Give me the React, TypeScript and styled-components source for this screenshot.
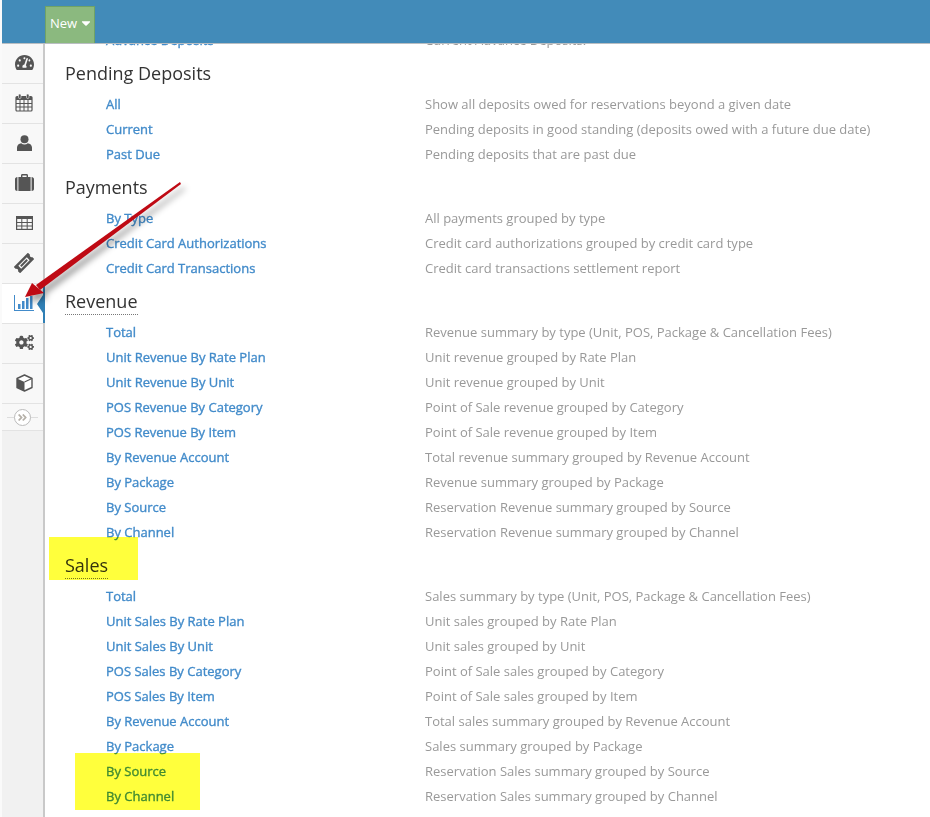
import React from 'react';
import styled, { createGlobalStyle } from 'styled-components';
import { FaAngleDoubleRight, FaCaretDown, FaCogs, FaTachometerAlt } from 'react-icons/fa';

const GlobalStyle = createGlobalStyle`
    html, body {
        margin: 0;
        padding: 0;
        background: #fff;
        font-family: "Open Sans", "Liberation Sans", sans-serif;
    }
`;

const StyledPage = styled.div`
    position: relative;
    width: 930px;
    height: 817px;
    padding-left: 2px;
    box-sizing: border-box;
    overflow: hidden;
    display: flex;
    flex-direction: column;
    background: #fafafa;
`;

const StyledTopBar = styled.header`
    flex: none;
    height: 44px;
    box-sizing: border-box;
    padding-left: 43px;
    background: #428bb9;
    border-bottom: 1px solid #b9bec2;
    display: flex;
    z-index: 2;
`;

const StyledNewButton = styled.div`
    width: 50px;
    height: 37px;
    margin-top: 6px;
    box-sizing: border-box;
    display: flex;
    align-items: center;
    justify-content: center;
    gap: 2px;
    background: #8bb97f;
    border: 1px solid #6fa266;
    border-bottom: none;
    color: #fff;
    font-size: 13px;
    padding: 0 0 4px 3px;
`;

const StyledBody = styled.div`
    flex: 1;
    min-height: 0;
    display: flex;
`;

const StyledSidebar = styled.nav`
    flex: none;
    width: 43px;
    box-sizing: border-box;
    background: #f1f1f1;
    border-right: 2px solid #c9c9c9;
`;

const StyledNavItem = styled.div<{ $active?: boolean }>`
    position: relative;
    height: 40px;
    box-sizing: border-box;
    display: flex;
    align-items: center;
    justify-content: center;
    background: ${(props) => (props.$active ? '#fff' : '#f8f8f8')};
    border-bottom: 1px solid #e3e3e3;
    color: #555;
    font-size: 19px;
    padding: 0 0 2px 3px;

    ${(props) =>
        props.$active &&
        `
        &::after {
            content: '';
            position: absolute;
            right: -2px;
            top: 0;
            width: 2px;
            height: 100%;
            background: #2f7fb5;
        }
        &::before {
            content: '';
            position: absolute;
            right: 0;
            top: 11px;
            border-style: solid;
            border-width: 9px 6px 9px 0;
            border-color: transparent #2f7fb5 transparent transparent;
        }
    `}
`;

const StyledCollapse = styled.div`
    position: relative;
    height: 27px;
    box-sizing: border-box;
    display: flex;
    align-items: center;
    justify-content: center;
    background: #f8f8f8;
    border-bottom: 1px solid #e3e3e3;

    &::before {
        content: '';
        position: absolute;
        left: 5px;
        right: 5px;
        top: 13px;
        border-top: 1px solid #ddd;
    }
`;

const StyledCollapseCircle = styled.span`
    position: relative;
    width: 17px;
    height: 17px;
    border-radius: 50%;
    box-sizing: border-box;
    border: 1px solid #bbb;
    background: #fff;
    display: flex;
    align-items: center;
    justify-content: center;
    color: #b5b0a8;
    font-size: 11px;
`;

const StyledMain = styled.main`
    flex: 1;
    min-width: 0;
    overflow: hidden;
    padding-left: 20px;
    background: #fff;
`;

const StyledReportList = styled.div`
    margin-top: -17px;
`;

const StyledHeadingRow = styled.div`
    height: 39px;
    padding-top: 9px;
    box-sizing: border-box;
`;

const StyledHeading = styled.span<{ $dotted?: boolean }>`
    display: inline-block;
    font-size: 18px;
    line-height: 25px;
    color: #333;
    border-bottom: ${(props) => (props.$dotted ? '1px dotted #777' : 'none')};
`;

const StyledRow = styled.div`
    height: 25px;
    display: flex;
    align-items: center;
    font-size: 13px;
`;

const StyledLink = styled.a`
    flex: none;
    width: 319px;
    margin-left: 41px;
    color: #428bca;
    -webkit-text-stroke: 0.35px #428bca;
`;

const StyledDescription = styled.span`
    color: #999;
`;

const StyledHighlight = styled.div<{ $x: number; $y: number; $w: number; $h: number }>`
    position: absolute;
    left: ${(props) => props.$x}px;
    top: ${(props) => props.$y}px;
    width: ${(props) => props.$w}px;
    height: ${(props) => props.$h}px;
    background: #ffff3c;
    mix-blend-mode: multiply;
`;

const StyledArrow = styled.svg`
    position: absolute;
    left: 0;
    top: 0;
    pointer-events: none;
    z-index: 3;
    filter: drop-shadow(4px 5px 3px rgba(0, 0, 0, 0.4));
`;

const CalendarIcon = () => (
    <svg width="18" height="19" viewBox="0 0 18 19" fill="none" stroke="#555">
        <rect x="1" y="3.5" width="16" height="14.5" rx="1" strokeWidth="1.2" />
        <path d="M1 10.5h16M1 14h16M5 7v11M9 7v11M13 7v11" strokeWidth="1" />
        <path d="M1 5.5h16" strokeWidth="3" />
        <rect x="3.5" y="1" width="2.5" height="4.5" rx="1.2" fill="#555" stroke="#f8f8f8" strokeWidth=".6" />
        <rect x="11.5" y="1" width="2.5" height="4.5" rx="1.2" fill="#555" stroke="#f8f8f8" strokeWidth=".6" />
    </svg>
);

const UserIcon = () => (
    <svg width="15" height="16" viewBox="0 0 15 16" fill="#555">
        <circle cx="7.5" cy="4.2" r="4" />
        <path d="M0 16v-3.5C0 10 2 8.6 4.2 8.2c1 .8 2 1.2 3.3 1.2s2.3-.4 3.3-1.2C13 8.6 15 10 15 12.5V16z" />
    </svg>
);

const BriefcaseIcon = () => (
    <svg width="19" height="17" viewBox="0 0 19 17" fill="#555">
        <path d="M6 3V1.4C6 .6 6.6 0 7.4 0h4.2c.8 0 1.4.6 1.4 1.4V3h-1.4V1.4H7.4V3z" />
        <rect x="3.4" y="3" width="12.2" height="14" />
        <path d="M0 5c0-1 1-2 2.4-2v14C1 17 0 16 0 15zM19 5c0-1-1-2-2.4-2v14c1.4 0 2.4-1 2.4-2z" />
    </svg>
);

const TableIcon = () => (
    <svg width="17" height="14" viewBox="0 0 17 14" fill="none" stroke="#555">
        <rect x=".6" y=".6" width="15.8" height="12.8" strokeWidth="1.2" />
        <path d="M.6 2h15.8" strokeWidth="2" />
        <path d="M.6 6.5h15.8M.6 10h15.8M5.8 3v10M11.2 3v10" strokeWidth="1" />
    </svg>
);

const TicketIcon = () => (
    <svg width="20" height="20" viewBox="0 0 20 20">
        <g transform="rotate(-45 10 10)">
            <path
                fillRule="evenodd"
                fill="#555"
                d="M0 5.5h20v3a1.6 1.6 0 0 0 0 3v3H0v-3a1.6 1.6 0 0 0 0-3zM4 8v4h12V8z"
            />
            <rect x="5.5" y="9" width="9" height="2" fill="#555" />
        </g>
    </svg>
);

const ChartIcon = () => (
    <svg width="20" height="16" viewBox="0 0 20 16" fill="#428bca">
        <path d="M0 0h1v15h19v1H0z" />
        <rect x="4" y="9" width="2.5" height="5" />
        <rect x="8" y="6" width="2.5" height="8" />
        <rect x="12" y="3" width="2.5" height="11" />
        <rect x="16" y="1" width="2.5" height="13" />
    </svg>
);

const CubeIcon = () => (
    <svg width="17" height="18" viewBox="0 0 17 18">
        <path d="M8.5 1L16 4.5v9L8.5 17 1 13.500v-9z" fill="#fff" stroke="#555" strokeWidth="1.4" strokeLinejoin="round" />
        <path d="M1 4.500l7.500 3.500v9L1 13.500z" fill="#555" />
        <path d="M8.500 8L16 4.500" stroke="#555" strokeWidth="1.2" />
    </svg>
);

type Report = { name: string; description: string };
type Section = { title: string; dotted?: boolean; reports: Report[] };

const LEADING_REPORT: Report = { name: 'Advance Deposits', description: 'Current Advance Deposits.' };

const SECTIONS: Section[] = [
    {
        title: 'Pending Deposits',
        reports: [
            { name: 'All', description: 'Show all deposits owed for reservations beyond a given date' },
            { name: 'Current', description: 'Pending deposits in good standing (deposits owed with a future due date)' },
            { name: 'Past Due', description: 'Pending deposits that are past due' },
        ],
    },
    {
        title: 'Payments',
        reports: [
            { name: 'By Type', description: 'All payments grouped by type' },
            { name: 'Credit Card Authorizations', description: 'Credit card authorizations grouped by credit card type' },
            { name: 'Credit Card Transactions', description: 'Credit card transactions settlement report' },
        ],
    },
    {
        title: 'Revenue',
        dotted: true,
        reports: [
            { name: 'Total', description: 'Revenue summary by type (Unit, POS, Package & Cancellation Fees)' },
            { name: 'Unit Revenue By Rate Plan', description: 'Unit revenue grouped by Rate Plan' },
            { name: 'Unit Revenue By Unit', description: 'Unit revenue grouped by Unit' },
            { name: 'POS Revenue By Category', description: 'Point of Sale revenue grouped by Category' },
            { name: 'POS Revenue By Item', description: 'Point of Sale revenue grouped by Item' },
            { name: 'By Revenue Account', description: 'Total revenue summary grouped by Revenue Account' },
            { name: 'By Package', description: 'Revenue summary grouped by Package' },
            { name: 'By Source', description: 'Reservation Revenue summary grouped by Source' },
            { name: 'By Channel', description: 'Reservation Revenue summary grouped by Channel' },
        ],
    },
    {
        title: 'Sales',
        dotted: true,
        reports: [
            { name: 'Total', description: 'Sales summary by type (Unit, POS, Package & Cancellation Fees)' },
            { name: 'Unit Sales By Rate Plan', description: 'Unit sales grouped by Rate Plan' },
            { name: 'Unit Sales By Unit', description: 'Unit sales grouped by Unit' },
            { name: 'POS Sales By Category', description: 'Point of Sale sales grouped by Category' },
            { name: 'POS Sales By Item', description: 'Point of Sale sales grouped by Item' },
            { name: 'By Revenue Account', description: 'Total sales summary grouped by Revenue Account' },
            { name: 'By Package', description: 'Sales summary grouped by Package' },
            { name: 'By Source', description: 'Reservation Sales summary grouped by Source' },
            { name: 'By Channel', description: 'Reservation Sales summary grouped by Channel' },
        ],
    },
];

function ReportRow({ report }: { report: Report }) {
    return (
        <StyledRow>
            <StyledLink>{report.name}</StyledLink>
            <StyledDescription>{report.description}</StyledDescription>
        </StyledRow>
    );
}

export default function App() {
    return (
        <StyledPage>
            <GlobalStyle />
            <StyledTopBar>
                <StyledNewButton>
                    New <FaCaretDown size={14} />
                </StyledNewButton>
            </StyledTopBar>
            <StyledBody>
                <StyledSidebar>
                    <StyledNavItem><FaTachometerAlt /></StyledNavItem>
                    <StyledNavItem><CalendarIcon /></StyledNavItem>
                    <StyledNavItem><UserIcon /></StyledNavItem>
                    <StyledNavItem><BriefcaseIcon /></StyledNavItem>
                    <StyledNavItem><TableIcon /></StyledNavItem>
                    <StyledNavItem><TicketIcon /></StyledNavItem>
                    <StyledNavItem $active><ChartIcon /></StyledNavItem>
                    <StyledNavItem><FaCogs /></StyledNavItem>
                    <StyledNavItem><CubeIcon /></StyledNavItem>
                    <StyledCollapse>
                        <StyledCollapseCircle><FaAngleDoubleRight /></StyledCollapseCircle>
                    </StyledCollapse>
                </StyledSidebar>
                <StyledMain>
                    <StyledReportList>
                        <ReportRow report={LEADING_REPORT} />
                        {SECTIONS.map((section) => (
                            <section key={section.title}>
                                <StyledHeadingRow>
                                    <StyledHeading $dotted={section.dotted}>{section.title}</StyledHeading>
                                </StyledHeadingRow>
                                {section.reports.map((report) => (
                                    <ReportRow key={report.name} report={report} />
                                ))}
                            </section>
                        ))}
                    </StyledReportList>
                </StyledMain>
            </StyledBody>
            <StyledHighlight $x={49} $y={537} $w={89} $h={43} />
            <StyledHighlight $x={75} $y={753} $w={125} $h={57} />
            <StyledArrow width="200" height="320" viewBox="0 0 200 320">
                <path d="M180 182L181 184L40 290L36 285z" fill="#bf0a14" />
                <path d="M25 297L32 283L44 293z" fill="#bf0a14" />
            </StyledArrow>
        </StyledPage>
    );
}
